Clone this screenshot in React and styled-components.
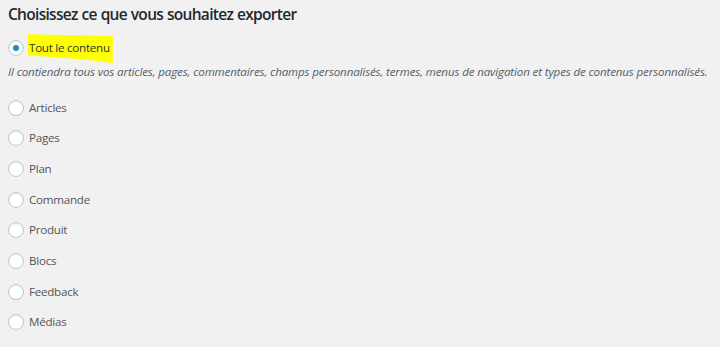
import React from "react";
import styled, { createGlobalStyle } from "styled-components";

const GlobalStyle = createGlobalStyle`
  html, body {
    margin: 0;
    padding: 0;
    background: #f1f1f1;
  }
  body {
    font-family: "Open Sans", "Noto Sans", sans-serif;
    color: #444;
  }
`;

const options = [
  "Articles",
  "Pages",
  "Plan",
  "Commande",
  "Produit",
  "Blocs",
  "Feedback",
  "Médias",
];

const App = () => {
  return (
    <>
      <GlobalStyle />
      <Page>
        <Title>Choisissez ce que vous souhaitez exporter</Title>
        <List>
          <Row>
            <Radio checked />
            <Highlight>Tout le contenu</Highlight>
          </Row>
          <Description>
            Il contiendra tous vos articles, pages, commentaires, champs
            personnalisés, termes, menus de navigation et types de contenus
            personnalisés.
          </Description>
          {options.map((label) => (
            <Row key={label}>
              <Radio />
              <Label>{label}</Label>
            </Row>
          ))}
        </List>
      </Page>
    </>
  );
};

export default App;

const Page = styled.div`
  width: 720px;
  height: 347px;
  padding: 3px 8px 0;
  box-sizing: border-box;
  overflow: hidden;
`;

const Title = styled.h2`
  margin: 0;
  font-size: 15.5px;
  font-weight: 600;
  letter-spacing: -0.7px;
  word-spacing: 0.5px;
  line-height: 22px;
  color: #23282d;
`;

const List = styled.div`
  display: flex;
  flex-direction: column;
  margin-top: 8px;
`;

const Row = styled.label`
  display: flex;
  align-items: center;
  gap: 5px;
  height: 30.7px;
  font-size: 11.6px;
  letter-spacing: -0.25px;
  color: #555;
`;

const Radio = styled.span`
  position: relative;
  width: 14px;
  height: 14px;
  border-radius: 50%;
  border: 1px solid #c3c6c9;
  background: #fff;
  box-shadow: inset 0 1px 2px rgba(0, 0, 0, 0.08);
  flex: none;

  &::after {
    content: "";
    display: ${(p) => (p.checked ? "block" : "none")};
    position: absolute;
    top: 4px;
    left: 4px;
    width: 6px;
    height: 6px;
    border-radius: 50%;
    background: #1e8cbe;
  }
`;

const Label = styled.span`
  line-height: 16px;
`;

const Highlight = styled.span`
  position: relative;
  z-index: 0;
  line-height: 16px;
  color: #333;

  &::before {
    content: "";
    position: absolute;
    z-index: -1;
    left: -1px;
    right: -3px;
    top: -6px;
    bottom: -7px;
    background: #fcff05;
    clip-path: polygon(0 0, 100% 6%, 100% 100%, 70% 88%, 0 72%);
  }
`;

const Description = styled.p`
  margin: 0;
  height: 28.5px;
  font-size: 11.6px;
  letter-spacing: -0.15px;
  font-style: italic;
  color: #555d66;
  line-height: 16px;
  white-space: nowrap;
`;
